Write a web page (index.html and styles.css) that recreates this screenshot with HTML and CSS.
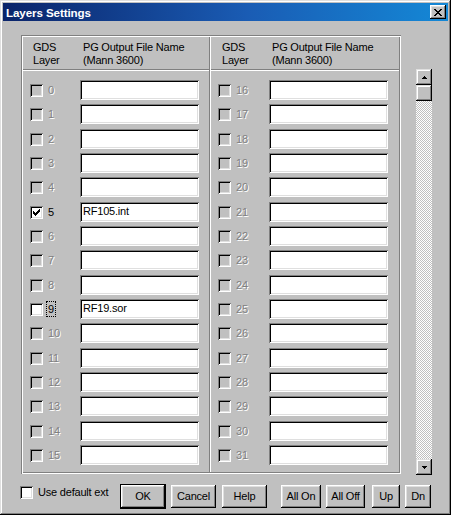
FILE: index.html
```html
<!DOCTYPE html>
<html>
<head>
<meta charset="utf-8">
<title>Layers Settings</title>
<link rel="stylesheet" href="styles.css">
</head>
<body>
<div class="window">
  <div class="titlebar">
    <span class="title">Layers Settings</span>
    <span class="close"><svg width="8" height="7" viewBox="0 0 8 7" shape-rendering="crispEdges"><path d="M0 0h2v1h-2zM6 0h2v1h-2zM1 1h2v1h-2zM5 1h2v1h-2zM2 2h4v1h-4zM3 3h2v1h-2zM2 4h4v1h-4zM1 5h2v1h-2zM5 5h2v1h-2zM0 6h2v1h-2zM6 6h2v1h-2z" fill="#000"/></svg></span>
  </div>
  <div class="main">
    <div class="panel">
      <div class="col left">
        <div class="head"><div class="h1">GDS<br>Layer</div><div class="h2">PG Output File Name<br>(Mann 3600)</div></div>
        <div class="body">
          <div class="row"><span class="cb"></span><span class="lbl dis">0</span><span class="inp"></span></div>
          <div class="row"><span class="cb"></span><span class="lbl dis">1</span><span class="inp"></span></div>
          <div class="row"><span class="cb"></span><span class="lbl dis">2</span><span class="inp"></span></div>
          <div class="row"><span class="cb"></span><span class="lbl dis">3</span><span class="inp"></span></div>
          <div class="row"><span class="cb"></span><span class="lbl dis">4</span><span class="inp"></span></div>
          <div class="row"><span class="cb on"><svg width="7" height="7" viewBox="0 0 7 7" shape-rendering="crispEdges"><path d="M6 0h1v3h-1zM5 1h1v3h-1zM4 2h1v3h-1zM0 2h1v3h-1zM1 3h1v3h-1zM2 4h1v3h-1zM3 3h1v3h-1z" fill="#000"/></svg></span><span class="lbl">5</span><span class="inp">RF105.int</span></div>
          <div class="row"><span class="cb"></span><span class="lbl dis">6</span><span class="inp"></span></div>
          <div class="row"><span class="cb"></span><span class="lbl dis">7</span><span class="inp"></span></div>
          <div class="row"><span class="cb"></span><span class="lbl dis">8</span><span class="inp"></span></div>
          <div class="row"><span class="cb on"></span><span class="lbl"><span class="focus">9</span></span><span class="inp">RF19.sor</span></div>
          <div class="row"><span class="cb"></span><span class="lbl dis">10</span><span class="inp"></span></div>
          <div class="row"><span class="cb"></span><span class="lbl dis">11</span><span class="inp"></span></div>
          <div class="row"><span class="cb"></span><span class="lbl dis">12</span><span class="inp"></span></div>
          <div class="row"><span class="cb"></span><span class="lbl dis">13</span><span class="inp"></span></div>
          <div class="row"><span class="cb"></span><span class="lbl dis">14</span><span class="inp"></span></div>
          <div class="row"><span class="cb"></span><span class="lbl dis">15</span><span class="inp"></span></div>
        </div>
      </div>
      <div class="col right">
        <div class="head"><div class="h1">GDS<br>Layer</div><div class="h2">PG Output File Name<br>(Mann 3600)</div></div>
        <div class="body">
          <div class="row"><span class="cb"></span><span class="lbl dis">16</span><span class="inp"></span></div>
          <div class="row"><span class="cb"></span><span class="lbl dis">17</span><span class="inp"></span></div>
          <div class="row"><span class="cb"></span><span class="lbl dis">18</span><span class="inp"></span></div>
          <div class="row"><span class="cb"></span><span class="lbl dis">19</span><span class="inp"></span></div>
          <div class="row"><span class="cb"></span><span class="lbl dis">20</span><span class="inp"></span></div>
          <div class="row"><span class="cb"></span><span class="lbl dis">21</span><span class="inp"></span></div>
          <div class="row"><span class="cb"></span><span class="lbl dis">22</span><span class="inp"></span></div>
          <div class="row"><span class="cb"></span><span class="lbl dis">23</span><span class="inp"></span></div>
          <div class="row"><span class="cb"></span><span class="lbl dis">24</span><span class="inp"></span></div>
          <div class="row"><span class="cb"></span><span class="lbl dis">25</span><span class="inp"></span></div>
          <div class="row"><span class="cb"></span><span class="lbl dis">26</span><span class="inp"></span></div>
          <div class="row"><span class="cb"></span><span class="lbl dis">27</span><span class="inp"></span></div>
          <div class="row"><span class="cb"></span><span class="lbl dis">28</span><span class="inp"></span></div>
          <div class="row"><span class="cb"></span><span class="lbl dis">29</span><span class="inp"></span></div>
          <div class="row"><span class="cb"></span><span class="lbl dis">30</span><span class="inp"></span></div>
          <div class="row"><span class="cb"></span><span class="lbl dis">31</span><span class="inp"></span></div>
        </div>
      </div>
    </div>
    <div class="scroll">
      <div class="sbtn"><svg width="5" height="3" viewBox="0 0 5 3" shape-rendering="crispEdges"><path d="M2 0h1v1h-1zM1 1h3v1h-3zM0 2h5v1h-5z" fill="#000"/></svg></div>
      <div class="thumb"></div>
      <div class="track"></div>
      <div class="sbtn"><svg width="5" height="3" viewBox="0 0 5 3" shape-rendering="crispEdges"><path d="M0 0h5v1h-5zM1 1h3v1h-3zM2 2h1v1h-1z" fill="#000"/></svg></div>
    </div>
  </div>
  <div class="footer">
    <div class="usedef"><span class="cb on"></span><span class="ulbl">Use default ext</span></div>
    <div class="btn def w-ok">OK</div>
    <div class="btn w-cancel">Cancel</div>
    <div class="btn w-help">Help</div>
    <div class="btn w-allon">All On</div>
    <div class="btn w-alloff">All Off</div>
    <div class="btn w-up">Up</div>
    <div class="btn w-dn">Dn</div>
  </div>
</div>
</body>
</html>
```
FILE: styles.css
```css
html, body {
  margin: 0;
  padding: 0;
  background: #ffffff;
}
body {
  font-family: "Liberation Sans", Arial, sans-serif;
  font-size: 11px;
  line-height: 13px;
  letter-spacing: -0.2px;
  color: #000;
}
.window {
  width: 451px;
  height: 515px;
  box-sizing: border-box;
  padding: 3px;
  background: #c0c0c0;
  box-shadow: inset -1px -1px #000, inset 1px 1px #dfdfdf, inset -2px -2px #808080, inset 2px 2px #fff;
  display: flex;
  flex-direction: column;
}
.titlebar {
  height: 18px;
  flex: none;
  display: flex;
  align-items: center;
  justify-content: space-between;
  padding-left: 3px;
  padding-right: 2px;
  background: linear-gradient(90deg, #0a246a 0%, #1a5cb4 55%, #1488d6 100%);
}
.title {
  color: #fff;
  font-weight: bold;
  font-size: 11.6px;
  letter-spacing: -0.1px;
}
.close {
  width: 16px;
  height: 14px;
  box-sizing: border-box;
  background: #c0c0c0;
  box-shadow: inset -1px -1px #000, inset 1px 1px #fff, inset -2px -2px #808080, inset 2px 2px #dfdfdf;
  display: flex;
  align-items: center;
  justify-content: center;
}
.close svg { display: block; }
.main {
  display: flex;
  align-items: flex-start;
  padding-top: 14px;
  padding-left: 18px;
}
.panel {
  width: 380px;
  height: 439px;
  box-sizing: border-box;
  padding: 2px;
  display: flex;
  box-shadow: inset 1px 1px #808080, inset -1px -1px #fff, inset 2px 2px #fff, inset -2px -2px #808080;
}
.col {
  display: flex;
  flex-direction: column;
}
.col.left {
  width: 187px;
  border-right: 1px solid #808080;
  box-sizing: border-box;
}
.col.left .lbl { width: 32px; }
.col.right {
  width: 189px;
  border-left: 1px solid #fff;
  box-sizing: border-box;
}
.col.right .head { padding-left: 11px; }
.head {
  height: 33px;
  box-sizing: border-box;
  padding-top: 4px;
  padding-left: 10px;
  display: flex;
  border-bottom: 1px solid #808080;
}
.h1 { width: 50px; }
.body {
  border-top: 1px solid #fff;
  padding-top: 9px;
  display: flex;
  flex-direction: column;
}
.row {
  height: 24.333px;
  display: flex;
  align-items: flex-start;
  padding-left: 7px;
}
.cb {
  width: 13px;
  height: 13px;
  margin-top: 4px;
  box-sizing: border-box;
  flex: none;
  background: #c0c0c0;
  box-shadow: inset 1px 1px #808080, inset -1px -1px #fff, inset 2px 2px #000, inset -2px -2px #dfdfdf;
  display: flex;
  align-items: center;
  justify-content: center;
}
.cb.on { background: #fff; }
.cb svg { display: block; }
.lbl {
  width: 33px;
  margin-left: 5px;
  margin-top: 4px;
  flex: none;
}
.lbl.dis {
  color: #808080;
  text-shadow: 1px 1px #fff;
}
.focus {
  outline: 1px dotted #000;
  outline-offset: 1px;
}
.inp {
  width: 119px;
  height: 20px;
  box-sizing: border-box;
  flex: none;
  background: #fff;
  box-shadow: inset 1px 1px #808080, inset -1px -1px #fff, inset 2px 2px #000, inset -2px -2px #dfdfdf;
  padding: 3px 0 0 3px;
}
.scroll {
  width: 16px;
  height: 406px;
  margin-left: 15px;
  margin-top: 34px;
  display: flex;
  flex-direction: column;
}
.sbtn, .thumb {
  height: 16px;
  flex: none;
  background: #c0c0c0;
  box-shadow: inset -1px -1px #000, inset 1px 1px #dfdfdf, inset -2px -2px #808080, inset 2px 2px #fff;
  display: flex;
  align-items: center;
  justify-content: center;
}
.sbtn svg { display: block; }
.track {
  flex: 1;
  background: repeating-conic-gradient(#c0c0c0 0 25%, #ffffff 0 50%) 0 0 / 2px 2px;
}
.footer {
  margin-top: 9px;
  padding-left: 17px;
  display: flex;
  align-items: flex-start;
  height: 25px;
}
.usedef {
  width: 100px;
  display: flex;
  align-items: flex-start;
  margin-top: 2px;
}
.usedef .cb { margin-top: 0; }
.ulbl { margin-left: 5px; }
.btn {
  height: 23px;
  margin-top: 1px;
  box-sizing: border-box;
  background: #c0c0c0;
  box-shadow: inset -1px -1px #000, inset 1px 1px #fff, inset -2px -2px #808080, inset 2px 2px #dfdfdf;
  display: flex;
  align-items: center;
  justify-content: center;
}
.btn.def {
  height: 25px;
  margin-top: 0;
  border: 1px solid #000;
}
.w-ok { width: 46px; }
.w-cancel { width: 45px; margin-left: 5px; }
.w-help { width: 45px; margin-left: 6px; }
.w-allon { width: 40px; margin-left: 14px; }
.w-alloff { width: 39px; margin-left: 5px; }
.w-up { width: 28px; margin-left: 7px; }
.w-dn { width: 26px; margin-left: 5px; }
```
